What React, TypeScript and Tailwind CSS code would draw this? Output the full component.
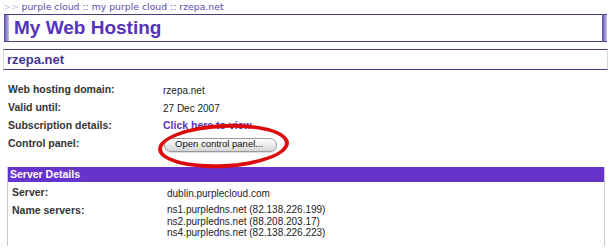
const body = "font-['Liberation_Sans',Arial,sans-serif]";
const crumb = "font-['DejaVu_Sans',Verdana,sans-serif]";

const InfoRow = ({label, children}: {label: string; children: React.ReactNode}) => (
  <div className="flex h-[18px] items-center">
    <div className="w-[155px] shrink-0 text-[10.5px] font-bold text-[#333]">{label}</div>
    <div className="text-[10px] text-[#222]">{children}</div>
  </div>
);

const App = () => {
  return (
    <div className={`w-[612px] h-[251px] overflow-hidden bg-white ${body}`}>
      <div className={`h-[14px] pl-[3px] pt-[1px] text-[9.3px] leading-[12px] text-[#5b4aa8] ${crumb}`}>
        <span className="text-[#c8c4dc]">&gt;&gt; </span>
        purple cloud :: my purple cloud :: rzepa.net
      </div>

      <div className="ml-[4px] flex h-[28px] w-[603px] border-y border-[#4b3d85]">
        <div className="w-[5px] bg-gradient-to-r from-[#5a4aa8] to-[#c9c3e6]" />
        <h1 className="flex-1 pl-[5px] text-[19px] font-bold leading-[26px] text-[#5533bb]">My Web Hosting</h1>
        <div className="w-[5px] bg-gradient-to-r from-[#5a4aa8] to-[#c9c3e6]" />
      </div>

      <div className="ml-[3px] mt-[7px] h-[21px] w-[605px] border-y border-x border-y-[#4b3d85] border-x-[#d6d6d6] pl-[3px] text-[13px] font-bold leading-[19px] text-[#44338f]">
        rzepa.net
      </div>

      <div className="pl-[8px] pt-[11px]">
        <InfoRow label="Web hosting domain:">rzepa.net</InfoRow>
        <InfoRow label="Valid until:">27 Dec 2007</InfoRow>
        <InfoRow label="Subscription details:">
          <a className="text-[10.5px] font-bold text-[#5533bb]">Click here to view</a>
        </InfoRow>
        <InfoRow label="Control panel:">
          <div className="relative">
            <button className="ml-[1px] mt-[1px] flex h-[14px] w-[113px] items-center rounded-full border border-[#9a9a9a] bg-gradient-to-b from-[#ffffff] to-[#d6d6d6] pl-[10px] text-[9.5px] text-[#111] shadow-[0_1px_1px_rgba(0,0,0,0.15)]">
              Open control panel...
            </button>
            <div className="absolute left-[-5px] top-[-14px] h-[44px] w-[131px] rotate-[-3deg] rounded-[50%] border-[4px] border-[#dd0a0a]" />
          </div>
        </InfoRow>
      </div>

      <div className="ml-[7px] mt-[14px] h-[79px] w-[598px] border-x border-[#c8c8c8]">
        <div className="h-[15px] bg-[#6633cc] pl-[2px] text-[10.5px] font-bold leading-[15px] text-white">Server Details</div>
        <div className="pl-[4px] pt-[2px]">
          <div className="flex h-[18px] items-center">
            <div className="w-[155px] shrink-0 text-[10.5px] font-bold text-[#333]">Server:</div>
            <div className="text-[10px] text-[#222]">dublin.purplecloud.com</div>
          </div>
          <div className="mt-[2px] flex">
            <div className="w-[155px] shrink-0 text-[10.5px] font-bold leading-[12px] text-[#333]">Name servers:</div>
            <div className="text-[10px] leading-[11.5px] text-[#222]">
              <div>ns1.purpledns.net (82.138.226.199)</div>
              <div>ns2.purpledns.net (88.208.203.17)</div>
              <div>ns4.purpledns.net (82.138.226.223)</div>
            </div>
          </div>
        </div>
      </div>

      <div className="pl-[10px] pt-[3px] text-[10.5px] font-bold leading-[12px] text-[#d0d0d0]">Back</div>
    </div>
  );
};

export default App;
